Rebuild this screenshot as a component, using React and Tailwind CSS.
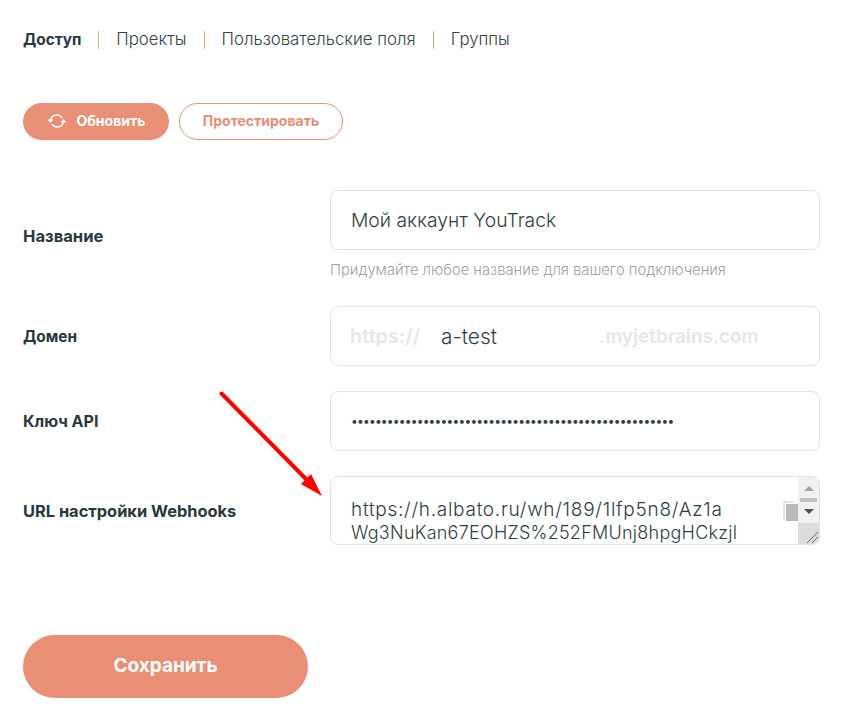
import React from 'react';

const font = "font-['Inter','Noto_Sans',sans-serif]";

function Tabs() {
  return (
    <div className="flex items-center h-[20px] pt-[2px] text-[16.800px] font-light text-[#33434a]">
      <span className="text-[15.300px] font-bold text-[#28383d]">Доступ</span>
      <span className="ml-[17px] mr-[17px] w-px h-[18px] bg-[#d9b08f]" />
      <span>Проекты</span>
      <span className="ml-[17px] mr-[17px] w-px h-[18px] bg-[#d9a77f]" />
      <span>Пользовательские поля</span>
      <span className="ml-[17px] mr-[17px] w-px h-[18px] bg-[#d9a77f]" />
      <span>Группы</span>
    </div>
  );
}

function Row({ label, labelSize = 'text-[16px]', children, className = '' }) {
  return (
    <div className={`flex items-center ${className}`}>
      <div className={`w-[307px] shrink-0 pt-[1px] font-bold text-[#28383d] ${labelSize}`}>{label}</div>
      {children}
    </div>
  );
}

function Field({ children }) {
  return (
    <div className="w-[490px] h-[60px] flex items-center px-[20px] pt-[1px] border border-[#e2e2e2] rounded-[8px] text-[19.300px] font-light text-[#2f3e44]">
      {children}
    </div>
  );
}

function RefreshIcon() {
  return (
    <svg width="20" height="18" viewBox="0 0 20 18" fill="none" stroke="#ffffff" strokeWidth="1.7">
      <path d="M3.5 8.5C4 5 6.5 3 9.8 3c2.3 0 4 1 5.2 2.7" />
      <path d="M16.500 9.500C16 13 13.500 15 10.200 15c-2.300 0-4-1-5.200-2.700" />
      <path d="M0.500 7.500H6.500L3.500 11Z" fill="#ffffff" stroke="none" />
      <path d="M13.500 10.500H19.500L16.500 7Z" fill="#ffffff" stroke="none" />
    </svg>
  );
}

function Scrollbar() {
  return (
    <div className="w-[21px] h-full shrink-0 flex flex-col">
      <div className="flex-1 bg-[#f1f1f1] flex flex-col items-center pt-[9px]">
        <svg width="10" height="5" viewBox="0 0 10 5"><path d="M5 0L10 5H0Z" fill="#a3a3a3" /></svg>
        <div className="w-[17px] h-[4px] bg-[#c1c1c1] mt-[7px]" />
        <svg className="mt-[7px]" width="10" height="5" viewBox="0 0 10 5"><path d="M0 0H10L5 5Z" fill="#505050" /></svg>
      </div>
      <div className="h-[21px] bg-[#dcdcdc] relative">
        <svg className="absolute right-0 bottom-0" width="14" height="14" viewBox="0 0 14 14" stroke="#6b6b6b" fill="none">
          <path d="M2 13L13 2M7 13L13 7" />
        </svg>
      </div>
    </div>
  );
}

function CopyIcon() {
  return (
    <svg className="absolute left-[452px] top-[24px]" width="15" height="20" viewBox="0 0 15 20">
      <path d="M1 19V1H11" fill="none" stroke="#dcdcdc" strokeWidth="1.500" />
      <rect x="3" y="3" width="12" height="17" fill="#b9b9b9" />
    </svg>
  );
}

export default function App() {
  return (
    <div className={`relative w-[841px] h-[727px] bg-white overflow-hidden ${font}`}>
      <div className="pl-[23px] pt-[29px]">
        <Tabs />

        <div className="flex gap-[10px] mt-[54px]">
          <button className="w-[146px] h-[37px] pb-[2px] rounded-full bg-[#e88f76] text-white text-[14px] font-bold flex items-center justify-center gap-[10px]">
            <RefreshIcon />
            Обновить
          </button>
          <button className="w-[164px] h-[37px] pb-[2px] rounded-full bg-white border border-[#e88f76] text-[#e88f76] text-[14px] font-bold">
            Протестировать
          </button>
        </div>

        <div className="flex items-center mt-[50px]">
          <div className="w-[307px] shrink-0 pt-[1px] text-[16.600px] font-bold text-[#28383d]">Название</div>
          <div>
            <Field>Мой аккаунт YouTrack</Field>
            <div className="mt-[9px] text-[14.760px] font-light leading-[22px] text-[#9aa3a6]">
              Придумайте любое название для вашего подключения
            </div>
          </div>
        </div>

        <Row label="Домен" labelSize="text-[15.400px]" className="mt-[25px]">
          <Field>
            <span className="w-[90px] -ml-[1px] text-[19.400px] font-bold text-[#e8e8e8]">https://</span>
            <span className="w-[158px] ml-[1px] text-[20.800px]">a-test</span>
            <span className="text-[18.600px] font-bold text-[#e8e8e8]">.myjetbrains.com</span>
          </Field>
        </Row>

        <Row label="Ключ API" labelSize="text-[16px] -mt-[1px]" className="mt-[25px]">
          <Field>
            <span className="-mt-[2px] text-[12px] font-normal tracking-[-0.78px] text-[#2f3e44]">
              {'•'.repeat(54)}
            </span>
          </Field>
        </Row>

        <Row label="URL настройки Webhooks" labelSize="text-[16.400px]" className="mt-[25px]">
          <div className="relative w-[490px] h-[69px] flex border border-[#e2e2e2] rounded-[8px] overflow-hidden font-light leading-[23px] text-[#2f3e44]">
            <div className="flex-1 pl-[20px] pt-[21px] overflow-hidden">
              <div className="whitespace-nowrap text-[19px] tracking-[0.73px]">https://h.albato.ru/wh/189/1lfp5n8/Az1a</div>
              <div className="whitespace-nowrap text-[18px] tracking-[0.25px]">Wg3NuKan67EOHZS%252FMUnj8hpgHCkzjl</div>
            </div>
            <CopyIcon />
            <Scrollbar />
          </div>
        </Row>

        <button className="mt-[90px] w-[285px] h-[63px] pb-[1px] rounded-full bg-[#e88f76] text-white text-[19px] font-bold">
          Сохранить
        </button>
      </div>

      {/* annotation arrow on top of the form */}
      <svg className="absolute left-0 top-0 pointer-events-none" width="841" height="727" viewBox="0 0 841 727">
        <path d="M221.500 393.500L308 481" stroke="#ff0000" strokeWidth="4" strokeLinecap="round" fill="none" />
        <path d="M322 496L301 484L311 474Z" fill="#ff0000" />
      </svg>
    </div>
  );
}
